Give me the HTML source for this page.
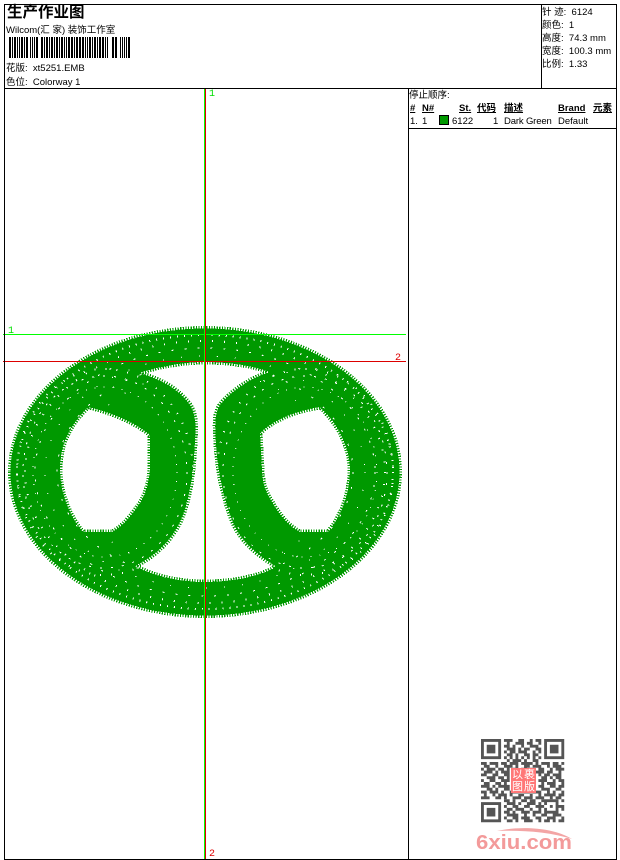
<!DOCTYPE html>
<html><head><meta charset="utf-8">
<style>
html,body{margin:0;padding:0;background:#fff}
#p{position:relative;width:620px;height:860px;overflow:hidden;background:#fff;font-family:"Liberation Sans","WenQuanYi Zen Hei","Noto Sans CJK SC",sans-serif;font-size:9.5px;color:#000}
#p div{position:absolute}
.t{white-space:pre;line-height:12px}
.b{font-weight:bold;text-decoration:underline}
.l{background:#000}
</style></head><body><div id="p">
<svg width="620" height="860" style="position:absolute;left:0;top:0" xmlns="http://www.w3.org/2000/svg">
<defs><clipPath id="c"><path clip-rule="evenodd" d="M8 472a197 146 0 1 0 394 0a197 146 0 1 0-394 0Z
M205 362C185 362 160 366 139 373C160 379 178 388 190 405C196 415 196 425 195 440C194 470 190 500 180 522C170 542 155 556 135 566C155 577 180 582 205 582C230 582 255 578 277 567C258 555 245 545 235 527C225 505 218 475 216 445C215 425 214 415 220 405C230 392 250 378 270 372C250 365 228 362 205 362Z
M88 407C110 412 135 422 150 435L150 470C148 490 143 500 135 510C128 520 120 528 112 532L83 532C72 520 60 495 60 470C60 450 65 430 88 407Z
M320 407C300 410 275 418 260 433L262 470C263 490 268 495 275 507C282 518 290 527 300 532L328 532C340 518 350 495 350 470C350 450 340 425 320 407Z"/></clipPath>
<filter id="s" x="-5%" y="-5%" width="110%" height="110%"><feGaussianBlur stdDeviation=".35"/></filter></defs>
<path fill="#009900" fill-rule="evenodd" stroke="#009900" stroke-width="5" stroke-dasharray="1.2 1.4" shape-rendering="crispEdges" d="M10.5 472a194.500 143.500 0 1 0 389 0a194.500 143.500 0 1 0-389 0Z
M205 362C185 362 160 366 139 373C160 379 178 388 190 405C196 415 196 425 195 440C194 470 190 500 180 522C170 542 155 556 135 566C155 577 180 582 205 582C230 582 255 578 277 567C258 555 245 545 235 527C225 505 218 475 216 445C215 425 214 415 220 405C230 392 250 378 270 372C250 365 228 362 205 362Z
M88 407C110 412 135 422 150 435L150 470C148 490 143 500 135 510C128 520 120 528 112 532L83 532C72 520 60 495 60 470C60 450 65 430 88 407Z
M320 407C300 410 275 418 260 433L262 470C263 490 268 495 275 507C282 518 290 527 300 532L328 532C340 518 350 495 350 470C350 450 340 425 320 407Z"/>
<g clip-path="url(#c)" fill="none" stroke="#fff" shape-rendering="crispEdges">
<ellipse cx="205" cy="472" rx="188" ry="137" stroke-width="2" stroke-dasharray="1 6"/>
<ellipse cx="205" cy="472" rx="180" ry="131" stroke-width="2" stroke-dasharray="1 11"/>
<ellipse cx="205" cy="472" rx="170" ry="124" stroke-width="1" stroke-dasharray="2 11"/>
<ellipse cx="205" cy="472" rx="160" ry="116" stroke-width="1" stroke-dasharray="1 17"/>
<ellipse cx="205" cy="472" rx="148" ry="108" stroke-width="1" stroke-dasharray="2 13"/>
<ellipse cx="205" cy="472" rx="130" ry="100" stroke-width="1" stroke-dasharray="1 19"/>
<ellipse cx="105" cy="472" rx="72" ry="85" stroke-width="1" stroke-dasharray="1 8"/>
<ellipse cx="105" cy="472" rx="82" ry="96" stroke-width="1" stroke-dasharray="2 9"/>
<ellipse cx="105" cy="472" rx="88" ry="103" stroke-width="2" stroke-dasharray="1 10"/>
<ellipse cx="305" cy="472" rx="72" ry="85" stroke-width="1" stroke-dasharray="1 8"/>
<ellipse cx="305" cy="472" rx="82" ry="96" stroke-width="1" stroke-dasharray="2 9"/>
<ellipse cx="305" cy="472" rx="88" ry="103" stroke-width="2" stroke-dasharray="1 10"/>
</g>
<g shape-rendering="crispEdges">
<rect x="3" y="334" width="403" height="1" fill="#00ff00"/>
<rect x="3" y="361" width="403" height="1" fill="#dd0000"/>
<rect x="204" y="89" width="1" height="770" fill="#00ff00"/>
<rect x="205" y="89" width="1" height="770" fill="#dd0000"/>
<path fill="#000" d="M9 37h2v21h-2zM12 37h1v21h-1zM14 37h2v21h-2zM17 37h1v21h-1zM19 37h1v21h-1zM21 37h2v21h-2zM24 37h1v21h-1zM26 37h2v21h-2zM30 37h1v21h-1zM32 37h1v21h-1zM34 37h1v21h-1zM36 37h2v21h-2zM41 37h2v21h-2zM44 37h1v21h-1zM46 37h2v21h-2zM49 37h1v21h-1zM51 37h2v21h-2zM54 37h1v21h-1zM56 37h2v21h-2zM59 37h1v21h-1zM61 37h2v21h-2zM64 37h1v21h-1zM66 37h1v21h-1zM68 37h2v21h-2zM71 37h2v21h-2zM74 37h1v21h-1zM76 37h2v21h-2zM79 37h2v21h-2zM82 37h2v21h-2zM85 37h1v21h-1zM87 37h1v21h-1zM89 37h2v21h-2zM92 37h1v21h-1zM94 37h2v21h-2zM97 37h1v21h-1zM99 37h2v21h-2zM102 37h2v21h-2zM105 37h1v21h-1zM107 37h1v21h-1zM112 37h2v21h-2zM115 37h2v21h-2zM120 37h1v21h-1zM122 37h1v21h-1zM124 37h1v21h-1zM126 37h1v21h-1zM128 37h2v21h-2z"/>
</g>
<g filter="url(#s)">
<g transform="translate(481 739) scale(2.87)">
<g fill="none" stroke="#555" stroke-width="1">
<path d="M.5 .5h6v6h-6zM22.5 .5h6v6h-6zM.5 22.5h6v6h-6z"/>
<path d="M8 .5h3M13 .5h2M17 .5h1M19 .5h2M9 1.5h1M12 1.5h3M16 1.5h2M20 1.5h1M8 2.5h2M11 2.5h1M14 2.5h1M17 2.5h3M9 3.5h3M13 3.5h1M15 3.5h2M19 3.5h2M8 4.5h1M10 4.5h2M13 4.5h3M18 4.5h1M20 4.5h1M9 5.5h2M12 5.5h1M15 5.5h2M18 5.5h2M8 6.5h1M10 6.5h1M12 6.5h1M14 6.5h1M16 6.5h1M18 6.5h1M20 6.5h1M9 7.5h1M11 7.5h3M15 7.5h1M18 7.5h2"/>
<path d="M0 8.5h2M3 8.5h3M7 8.5h2M10 8.5h3M14 8.5h4M19 8.5h1M21 8.5h3M25 8.5h2M28 8.5h1M1 9.5h2M5 9.5h1M8 9.5h3M12 9.5h1M15 9.5h2M18 9.5h3M23 9.5h1M25 9.5h3M0 10.5h1M2 10.5h3M6 10.5h2M9 10.5h1M11 10.5h2M14 10.5h2M17 10.5h1M20 10.5h2M24 10.5h1M26 10.5h3M1 11.5h3M5 11.5h1M7 11.5h3M12 11.5h2M19 11.5h3M23 11.5h2M27 11.5h1M0 12.5h2M4 12.5h2M8 12.5h2M20 12.5h1M22 12.5h2M25 12.5h3M2 13.5h3M6 13.5h2M9 13.5h1M21 13.5h2M24 13.5h1M26 13.5h2M0 14.5h1M3 14.5h2M7 14.5h3M20 14.5h3M25 14.5h1M27 14.5h2M1 15.5h2M5 15.5h2M8 15.5h1M21 15.5h1M23 15.5h3M28 15.5h1M0 16.5h3M4 16.5h1M6 16.5h4M20 16.5h2M24 16.5h2M27 16.5h2M2 17.5h2M5 17.5h1M8 17.5h2M12 17.5h1M14 17.5h2M18 17.5h1M21 17.5h3M26 17.5h2M0 18.5h2M3 18.5h3M7 18.5h1M10 18.5h3M15 18.5h2M18 18.5h3M23 18.5h1M25 18.5h1M28 18.5h1M1 19.5h1M4 19.5h1M6 19.5h3M10 19.5h1M13 19.5h2M17 19.5h1M20 19.5h1M22 19.5h4M27 19.5h2M0 20.5h3M5 20.5h2M8 20.5h1M11 20.5h3M15 20.5h3M19 20.5h3M24 20.5h1M26 20.5h2"/>
<path d="M8 21.5h2M11 21.5h1M14 21.5h2M17 21.5h2M21 21.5h6M28 21.5h1M9 22.5h3M13 22.5h1M16 22.5h3M20 22.5h1M22 22.5h1M26 22.5h1M8 23.5h1M11 23.5h2M15 23.5h2M19 23.5h3M24 23.5h1M26 23.5h3M9 24.5h2M12 24.5h3M17 24.5h1M20 24.5h1M22 24.5h1M26 24.5h1M28 24.5h1M8 25.5h2M11 25.5h1M14 25.5h3M18 25.5h3M22 25.5h5M9 26.5h4M15 26.5h1M18 26.5h1M21 26.5h2M25 26.5h3M8 27.5h1M11 27.5h2M14 27.5h3M19 27.5h2M23 27.5h3M28 27.5h1M9 28.5h2M12 28.5h1M15 28.5h3M20 28.5h1M22 28.5h2M25 28.5h1M27 28.5h2"/>
</g>
<path fill="#555" d="M2 2h3v3h-3zM24 2h3v3h-3zM2 24h3v3h-3z"/>
</g>
<rect x="511" y="768" width="25" height="25" fill="#f77"/>
<path d="M497 831C520 826 552 827 572 839C550 832 522 830 497 831Z" fill="#f3a5a5"/>
<text x="476" y="849" font-family="Liberation Sans" font-weight="bold" font-size="20.5" fill="#f39a9a" textLength="96" lengthAdjust="spacingAndGlyphs">6xiu.com</text>
</g>
</svg>
<div class="l" style="left:4px;top:4px;width:613px;height:1px"></div>
<div class="l" style="left:4px;top:859px;width:613px;height:1px"></div>
<div class="l" style="left:4px;top:4px;width:1px;height:856px"></div>
<div class="l" style="left:616px;top:4px;width:1px;height:856px"></div>
<div class="l" style="left:4px;top:88px;width:613px;height:1px"></div>
<div class="l" style="left:541px;top:4px;width:1px;height:85px"></div>
<div class="l" style="left:408px;top:88px;width:1px;height:772px"></div>
<div class="l" style="left:408px;top:128px;width:209px;height:1px"></div>

<div class="t" style="left:7px;top:5px;font-size:15.5px;font-weight:bold;line-height:16px">生产作业图</div>
<div class="t" style="left:6px;top:25px;font-size:9.5px">Wilcom(汇 家) 装饰工作室</div>
<div class="t" style="left:6px;top:63px">花版:  xt5251.EMB</div>
<div class="t" style="left:6px;top:77px">色位:  Colorway 1</div>

<div class="t" style="left:542px;top:7px">针 迹:  6124</div>
<div class="t" style="left:542px;top:20px">颜色:  1</div>
<div class="t" style="left:542px;top:33px">高度:  74.3 mm</div>
<div class="t" style="left:542px;top:46px">宽度:  100.3 mm</div>
<div class="t" style="left:542px;top:59px">比例:  1.33</div>

<div class="t" style="left:409px;top:90px">停止顺序:</div>
<div class="t b" style="left:410px;top:103px">#</div>
<div class="t b" style="left:422px;top:103px">N#</div>
<div class="t b" style="left:459px;top:103px">St.</div>
<div class="t b" style="left:477px;top:103px">代码</div>
<div class="t b" style="left:504px;top:103px">描述</div>
<div class="t b" style="left:558px;top:103px">Brand</div>
<div class="t b" style="left:593px;top:103px">元素</div>
<div class="t" style="left:410px;top:116px">1.</div>
<div class="t" style="left:422px;top:116px">1</div>
<div style="left:439px;top:115px;background:#009900;border:1px solid #000;width:8px;height:8px"></div>
<div class="t" style="left:452px;top:116px">6122</div>
<div class="t" style="left:493px;top:116px">1</div>
<div class="t" style="left:504px;top:116px;letter-spacing:-.15px">Dark Green</div>
<div class="t" style="left:558px;top:116px">Default</div>

<div class="t" style="left:209px;top:89px;font-size:10px;color:#00dd00;font-family:'Liberation Mono',monospace">1</div>
<div class="t" style="left:8px;top:326px;font-size:10px;color:#00dd00;font-family:'Liberation Mono',monospace">1</div>
<div class="t" style="left:395px;top:353px;font-size:10px;color:#dd0000;font-family:'Liberation Mono',monospace">2</div>
<div class="t" style="left:209px;top:849px;font-size:10px;color:#dd0000;font-family:'Liberation Mono',monospace">2</div>

<div class="t" style="left:512px;top:769px;width:24px;font-size:11px;line-height:12px;color:#fff;white-space:normal;letter-spacing:1px">以裹图版</div>
</div></body></html>
